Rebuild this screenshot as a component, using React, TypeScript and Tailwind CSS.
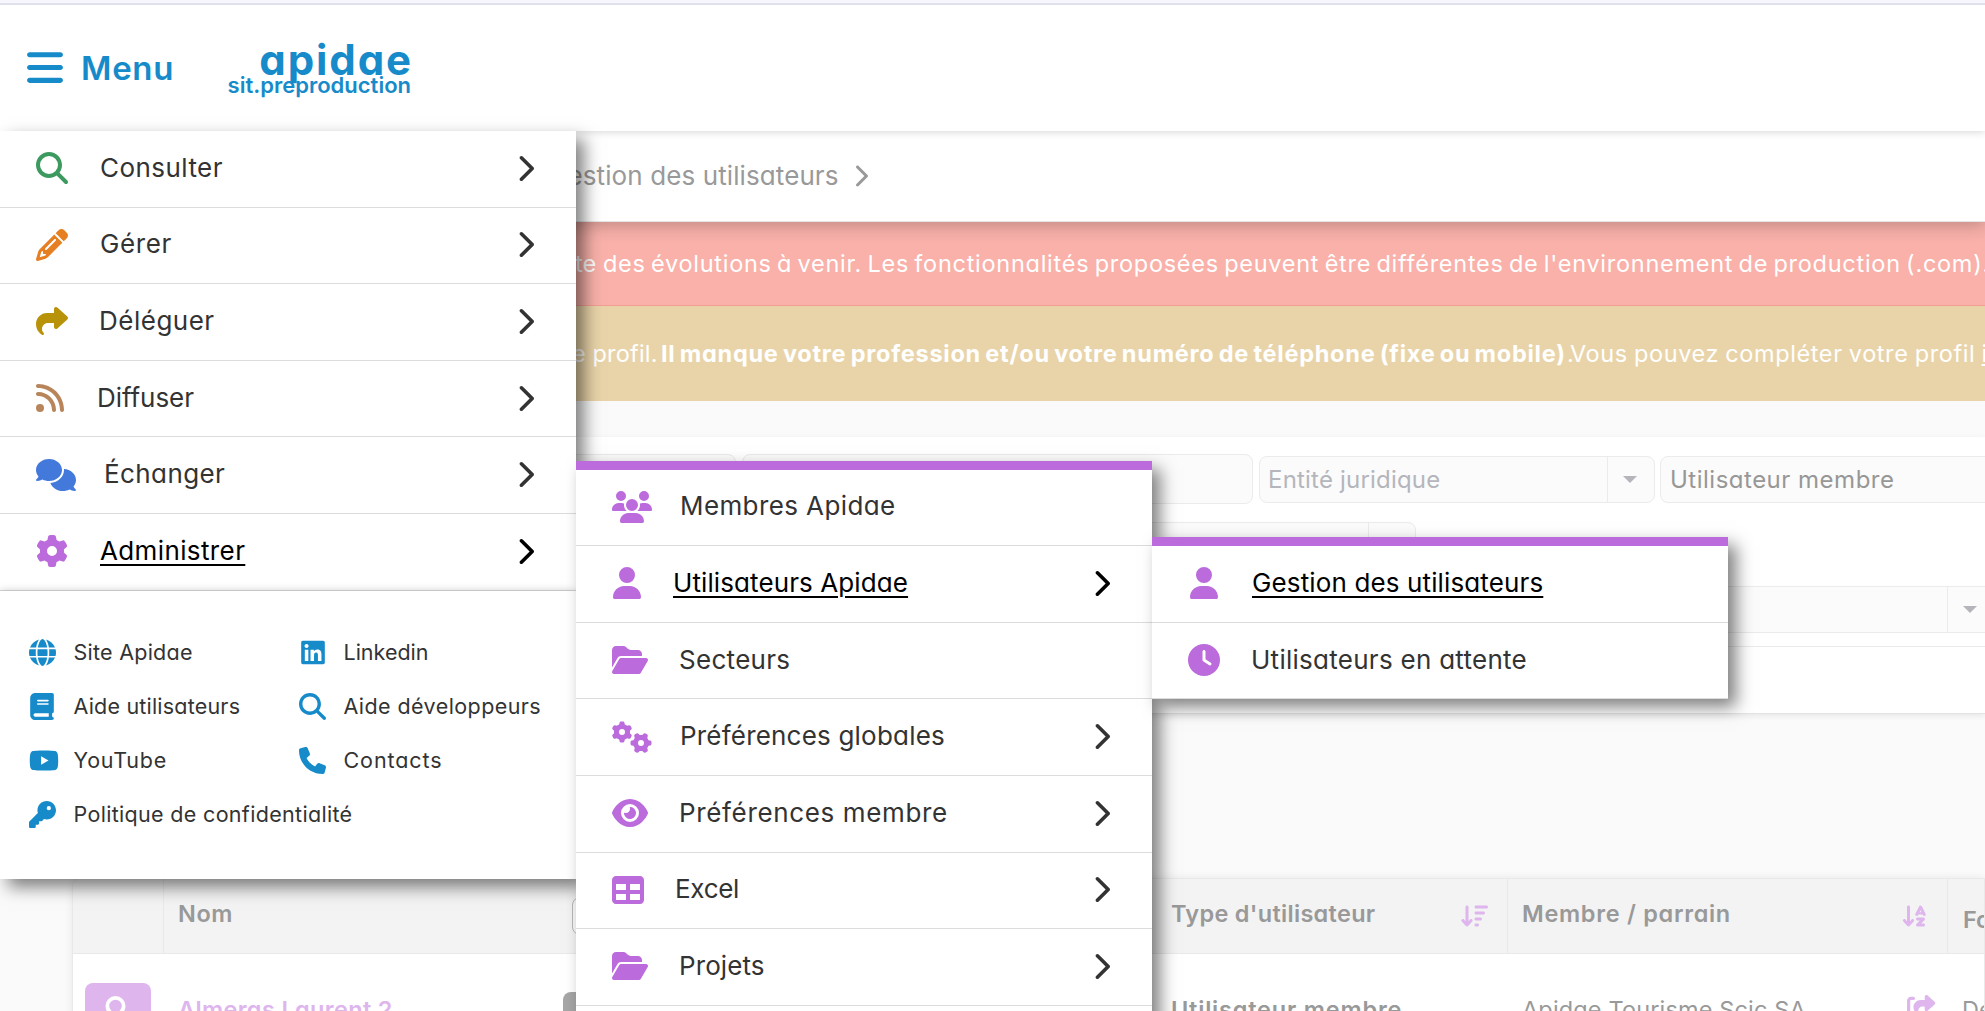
import type { ReactNode } from "react";
import type { IconType } from "react-icons";
import {
  FaArrowDownAZ,
  FaArrowDownWideShort,
  FaBars,
  FaBook,
  FaChevronRight,
  FaClock,
  FaComments,
  FaEye,
  FaFolderOpen,
  FaGear,
  FaGears,
  FaGlobe,
  FaKey,
  FaLinkedin,
  FaMagnifyingGlass,
  FaPencil,
  FaPhone,
  FaRegUser,
  FaRss,
  FaShare,
  FaShareFromSquare,
  FaTable,
  FaUser,
  FaUsers,
  FaYoutube,
} from "react-icons/fa6";

type Entry = {
  label: string;
  icon: IconType;
  iconClass: string;
  textClass: string;
  arrow?: boolean;
  active?: boolean;
};

const mainMenu: Entry[] = [
  { label: "Consulter", icon: FaMagnifyingGlass, iconClass: "w-8 text-[#3c9a5f]", textClass: "pl-[32px] tracking-[0.45px]", arrow: true },
  { label: "Gérer", icon: FaPencil, iconClass: "w-8 text-[#e67e22]", textClass: "pl-[32px] tracking-[0.6px]", arrow: true },
  { label: "Déléguer", icon: FaShare, iconClass: "w-8 text-[#b8930a]", textClass: "pl-[31px] tracking-[0.5px]", arrow: true },
  { label: "Diffuser", icon: FaRss, iconClass: "w-7 text-[#b8845a]", textClass: "pl-[33px] tracking-[-0.05px]", arrow: true },
  { label: "Échanger", icon: FaComments, iconClass: "w-10 text-[#4379db]", textClass: "pl-[28px] tracking-[0.4px]", arrow: true },
  { label: "Administrer", icon: FaGear, iconClass: "w-8 text-[#bb6bdb]", textClass: "pl-[32px] tracking-[0.38px]", arrow: true, active: true },
];

const adminMenu: Entry[] = [
  { label: "Membres Apidae", icon: FaUsers, iconClass: "w-10", textClass: "pl-[28px] tracking-[0.4px]" },
  { label: "Utilisateurs Apidae", icon: FaUser, iconClass: "ml-[1px] w-7", textClass: "pl-[32px] tracking-[0.1px]", arrow: true, active: true },
  { label: "Secteurs", icon: FaFolderOpen, iconClass: "w-9", textClass: "pl-[31px] tracking-[0.3px]" },
  { label: "Préférences globales", icon: FaGears, iconClass: "w-10", textClass: "pl-[28px] tracking-[0.2px]", arrow: true },
  { label: "Préférences membre", icon: FaEye, iconClass: "w-9", textClass: "pl-[31px] tracking-[0.65px]", arrow: true },
  { label: "Excel", icon: FaTable, iconClass: "w-8", textClass: "pl-[31px] tracking-[-0.3px]", arrow: true },
  { label: "Projets", icon: FaFolderOpen, iconClass: "w-9", textClass: "pl-[31px] tracking-[0.1px]", arrow: true },
  { label: "Profils", icon: FaUser, iconClass: "w-7", textClass: "pl-[32px]", arrow: true },
];

const usersMenu: Entry[] = [
  { label: "Gestion des utilisateurs", icon: FaUser, iconClass: "w-8", textClass: "pl-[32px] tracking-[0.13px]", active: true },
  { label: "Utilisateurs en attente", icon: FaClock, iconClass: "w-8", textClass: "pl-[31px] tracking-[0.27px]" },
];

const links: { label: string; icon: IconType; iconClass: string; textClass: string }[] = [
  { label: "Site Apidae", icon: FaGlobe, iconClass: "w-[27px]", textClass: "tracking-[0.25px]" },
  { label: "Linkedin", icon: FaLinkedin, iconClass: "w-6", textClass: "tracking-[0px]" },
  { label: "Aide utilisateurs", icon: FaBook, iconClass: "w-6 mr-[2px]", textClass: "tracking-[0.2px]" },
  { label: "Aide développeurs", icon: FaMagnifyingGlass, iconClass: "w-[27px]", textClass: "tracking-[0.42px]" },
  { label: "YouTube", icon: FaYoutube, iconClass: "w-[30px] ml-[2px]", textClass: "tracking-[0.75px]" },
  { label: "Contacts", icon: FaPhone, iconClass: "w-[27px]", textClass: "tracking-[0.9px]" },
  { label: "Politique de confidentialité", icon: FaKey, iconClass: "w-[27px]", textClass: "tracking-[0.32px]" },
];

function MenuRow({ entry }: { entry: Entry }) {
  const Icon = entry.icon;
  return (
    <li
      className={`flex h-[76.6px] items-center border-b border-[#dcdcdc] pr-[42px] pb-px pl-9 ${
        entry.active ? "text-black" : "text-[#333]"
      }`}
    >
      <Icon className={`h-8 shrink-0 ${entry.iconClass}`} />
      <span
        className={`pb-px text-[26px] leading-8 ${entry.textClass} ${
          entry.active ? "underline decoration-2 underline-offset-[4px]" : ""
        }`}
      >
        {entry.label}
      </span>
      {entry.arrow && <FaChevronRight className="ml-auto h-[29px] w-[18px] shrink-0" />}
    </li>
  );
}

function SubMenu({ entries, className }: { entries: Entry[]; className: string }) {
  return (
    <ul
      className={`absolute z-20 w-[576px] border-t-9 border-[#bb6bdb] bg-white shadow-[8px_8px_16px_rgba(0,0,0,0.5)] [&_svg:first-child]:text-[#bb6bdb] ${className}`}
    >
      {entries.map((entry) => (
        <MenuRow key={entry.label} entry={entry} />
      ))}
    </ul>
  );
}

function Field({ className, children, select }: { className: string; children?: ReactNode; select?: boolean }) {
  return (
    <div className={`flex shrink-0 items-center rounded-lg border border-[#ebebeb] bg-[#fbfbfb] text-2xl ${className}`}>
      <span className="flex-1 pt-[2px] whitespace-nowrap">{children}</span>
      {select && (
        <span className="flex h-full w-[47px] items-center justify-center border-l border-[#ebebeb] pr-[3px]">
          <span className="border-x-[7px] border-t-[7px] border-x-transparent border-t-[#b4b6bc]" />
        </span>
      )}
    </div>
  );
}

function MainMenu() {
  return (
    <nav className="absolute top-[131px] left-0 z-20 w-[576px] bg-white shadow-[8px_8px_16px_rgba(0,0,0,0.5)]">
      <div className="h-[748px] overflow-hidden">
        <ul>
          {mainMenu.map((entry) => (
            <MenuRow key={entry.label} entry={entry} />
          ))}
        </ul>
        <div className="relative grid h-full auto-rows-[54px] grid-cols-[270px_1fr] bg-white pt-[35px] pl-[29px] shadow-[0_0_8px_rgba(0,0,0,0.22)]">
          {links.map(({ label, icon: Icon, iconClass, textClass }) => (
            <a
              key={label}
              className={`flex items-center text-[21.5px] whitespace-nowrap text-[#333] ${
                label.startsWith("Politique") ? "col-span-2" : ""
              }`}
            >
              <span className="mr-[17.5px] flex w-[27px] shrink-0 justify-center text-[#178bca]">
                <Icon className={`h-[27px] shrink-0 ${iconClass}`} />
              </span>
              <span className={textClass}>{label}</span>
            </a>
          ))}
        </div>
      </div>
    </nav>
  );
}

export default function App() {
  return (
    <div className="relative h-[1011px] w-[1985px] overflow-hidden bg-[#fafafa] font-['Inter','Liberation_Sans',sans-serif] text-[#333] [font-feature-settings:'cv11']">
      <header className="relative z-10 flex h-[131px] items-center border-t-3 border-[#f6f6fc] bg-white text-[#178bca] shadow-[0_1px_8px_rgba(0,0,0,0.16)]">
        <div className="h-full w-full border-t-2 border-[#e0e1ec]">
          <div className="flex h-full items-start">
            <FaBars className="mt-[42px] ml-[27px] h-[41px] w-9" />
            <span className="mt-[43px] ml-[18px] w-[99px] text-[33px] leading-10 font-semibold tracking-[0.7px]">Menu</span>
            <div className="ml-[47px] flex w-[186px] flex-col items-end pt-[35px]">
              <span className="text-[42px] leading-[40px] font-bold tracking-[1.9px]">apidae</span>
              <span className="mt-[-9px] mr-[2px] text-[22px] leading-7 font-semibold">sit.preproduction</span>
            </div>
          </div>
        </div>
      </header>

      <div className="relative flex h-[91px] items-center border-b border-[#e6e6e6] bg-white pb-px pl-[548px] text-[26px] text-[#999] shadow-[0_4px_16px_rgba(0,0,0,0.22)]">
        <span className="tracking-[0.1px]">Gestion des utilisateurs</span>
        <FaChevronRight className="ml-[14px] h-[26px] w-[15px]" />
      </div>

      <div className="flex h-[84px] items-center border-b border-[#f49d95] bg-[#f9b1aa] pl-[575px] text-[23.5px] whitespace-nowrap text-white">
        <span className="w-7 shrink-0">te</span>
        <span className="tracking-[0.73px] [word-spacing:-2px]">
          des évolutions à venir. Les fonctionnalités proposées peuvent être différentes de l'environnement de production (.com).
        </span>
      </div>
      <div className="flex h-[95px] items-center bg-[#e9d4a9] pl-[572px] text-[23.5px] whitespace-nowrap text-white">
        <span className="w-[20.5px] shrink-0">e</span>
        <span className="w-[68.5px] shrink-0 tracking-[0.2px]">profil.</span>
        <b className="w-[906px] shrink-0 tracking-[0.75px] [word-spacing:-2px]">
          Il manque votre profession et/ou votre numéro de téléphone (fixe ou mobile)
        </b>
        <span className="w-[3px] shrink-0">.</span>
        <span className="tracking-[0.6px] [word-spacing:-1px]">
          Vous pouvez compléter votre profil <u>ici</u>
        </span>
      </div>

      <section className="mt-9 h-[277px] border-b border-[#e3e3e3] bg-white pt-[17px] shadow-[0_2px_6px_rgba(0,0,0,0.08)]">
        <div className="flex items-center">
          <Field className="ml-20 h-[50px] w-[656px]" />
          <Field className="ml-[6px] h-[50px] w-[511px]" />
          <Field select className="ml-[6px] h-[47px] w-[396px] pl-[8px] tracking-[0.2px] text-[#b4b6bc]">
            Entité juridique
          </Field>
          <Field select className="ml-[5px] h-[47px] w-[400px] pl-[9px] tracking-[0.5px] text-[#979797]">
            Utilisateur membre
          </Field>
        </div>
        <div className="mt-[18px] flex">
          <Field select className="ml-20 h-[47px] w-[1336px]" />
        </div>
        <div className="mt-[17px] flex">
          <Field select className="ml-20 h-[47px] w-[1915px]" />
        </div>
        <div className="mt-[13px] border-t border-[#ebebeb]" />
      </section>

      <section className="mt-[164px] ml-[72px] h-40 overflow-hidden rounded-tl-lg border border-[#e9e9e9] bg-white text-[23.5px] whitespace-nowrap text-[#999] shadow-[0_0_8px_rgba(0,0,0,0.08)]">
        <div className="grid h-[75px] grid-cols-[91px_995px_349px_440px_200px] items-center border-b border-[#e9e9e9] bg-[#f3f3f3] font-semibold">
          <div className="h-full border-r border-[#e9e9e9]" />
          <div className="flex items-center pl-[14px]">
            <span className="w-[394px] pb-[5px] tracking-[0.6px]">Nom</span>
            <span className="h-[38px] w-[500px] rounded-lg border border-[#b8b8b8] bg-[#f8f8f8]" />
          </div>
          <div className="flex h-full items-center border-r border-[#e9e9e9] pr-[19px] pb-[5px] pl-[12px]">
            <span className="tracking-[0.3px]">Type d'utilisateur</span>
            <FaArrowDownWideShort className="mt-1 ml-auto h-6 w-[27px] text-[#deb5ed]" />
          </div>
          <div className="flex h-full items-center border-r border-[#e9e9e9] pr-[19px] pb-[5px] pl-[14px]">
            <span className="tracking-[0.7px]">Membre / parrain</span>
            <FaArrowDownAZ className="mt-1 ml-auto h-6 w-[27px] text-[#deb5ed]" />
          </div>
          <div className="pt-[7px] pl-[15px]">Fonction</div>
        </div>
        <div className="grid grid-cols-[91px_995px_349px_440px_200px] pt-[29px]">
          <div className="ml-3 flex h-[66px] w-[66px] justify-center rounded-lg bg-[#deb5ed] pt-[13px] text-white">
            <FaRegUser className="mr-[5px] h-10 w-[35px]" />
          </div>
          <div className="flex pl-[14px]">
            <span className="w-[385px] pt-[9px] font-semibold tracking-[0.35px] text-[#deb5ed]">Almeras Laurent 2</span>
            <span className="mt-[9px] h-9 w-40 rounded-lg bg-[#a6a6a6]" />
          </div>
          <div className="pt-[9px] pl-[12px] font-semibold tracking-[0.8px]">Utilisateur membre</div>
          <div className="flex pt-[9px] pr-[12px] pl-[14px]">
            <span className="tracking-[0.15px]">Apidae Tourisme Scic SA</span>
            <FaShareFromSquare className="mt-[3px] ml-auto h-[26px] w-[29px] text-[#deb5ed]" />
          </div>
          <div className="pt-[9px] pl-[14px]">Département</div>
        </div>
      </section>

      <MainMenu />
      <SubMenu entries={adminMenu} className="top-[460.6px] left-[576px]" />
      <SubMenu entries={usersMenu} className="top-[537.2px] left-[1152px]" />
    </div>
  );
}
